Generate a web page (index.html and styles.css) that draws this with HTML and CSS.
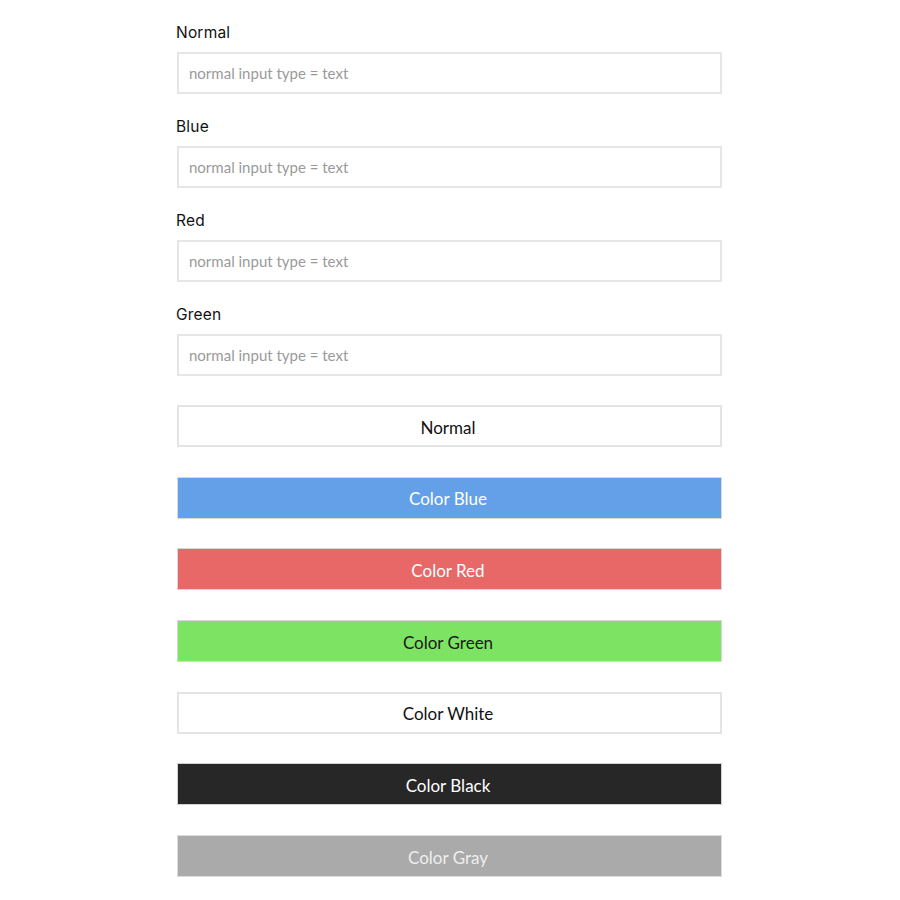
FILE: index.html
```html
<!DOCTYPE html>
<html>
<head>
<meta charset="utf-8">
<link rel="stylesheet" href="styles.css">
</head>
<body>
<div class="wrap">
  <div class="field">
    <label class="lbl">Normal</label>
    <input class="inp" type="text" placeholder="normal input type = text">
  </div>
  <div class="field">
    <label class="lbl">Blue</label>
    <input class="inp" type="text" placeholder="normal input type = text">
  </div>
  <div class="field">
    <label class="lbl">Red</label>
    <input class="inp" type="text" placeholder="normal input type = text">
  </div>
  <div class="field">
    <label class="lbl">Green</label>
    <input class="inp" type="text" placeholder="normal input type = text">
  </div>
  <div class="buttons">
    <button class="btn btn-normal">Normal</button>
    <button class="btn btn-blue">Color Blue</button>
    <button class="btn btn-red">Color Red</button>
    <button class="btn btn-green">Color Green</button>
    <button class="btn btn-white">Color White</button>
    <button class="btn btn-black">Color Black</button>
    <button class="btn btn-gray">Color Gray</button>
  </div>
</div>
</body>
</html>
```
FILE: styles.css
```css
html, body {
  margin: 0;
  padding: 0;
  background: #ffffff;
}
body {
  padding-top: 21px;
}
.wrap {
  width: 545px;
  margin-left: 177px;
  display: flex;
  flex-direction: column;
}
.field {
  display: flex;
  flex-direction: column;
  margin-bottom: 21px;
}
.lbl {
  font-family: Inter, "Noto Sans", sans-serif;
  font-size: 15.5px;
  letter-spacing: 0.2px;
  line-height: 22px;
  height: 22px;
  padding-top: 1px;
  box-sizing: border-box;
  color: #111;
  margin-bottom: 9px;
  margin-left: -1px;
}
.inp {
  box-sizing: border-box;
  height: 42px;
  width: 100%;
  border: 2px solid #e6e6e6;
  padding: 0 10px;
  font-family: Lato, sans-serif;
  font-size: 15px;
  color: #333;
  outline: none;
  margin: 0;
}
.inp::placeholder {
  color: #9a9a9a;
}
.buttons {
  display: flex;
  flex-direction: column;
  gap: 29.7px;
  margin-top: 8px;
}
.btn {
  box-sizing: border-box;
  height: 42px;
  width: 100%;
  margin: 0;
  padding: 2px 0 0 0;
  font-family: Lato, sans-serif;
  font-size: 17px;
  border: 1px solid #d8d8d8;
  cursor: pointer;
  text-align: center;
  text-indent: -3px;
}
.btn-normal { background: #fff; color: #111; border: 2px solid #e4e4e4; }
.btn-blue { background: #63a0e8; color: #fff; }
.btn-red { background: #e86767; color: #fff; }
.btn-green { background: #7de362; color: #1a1a1a; }
.btn-white { background: #fff; color: #111; border: 2px solid #e4e4e4; }
.btn-black { background: #272727; color: #fff; border: 1px solid #d0d0d0; }
.btn-gray { background: #aaaaaa; color: #eeeeee; border: 1px solid #dcdcdc; }
```
